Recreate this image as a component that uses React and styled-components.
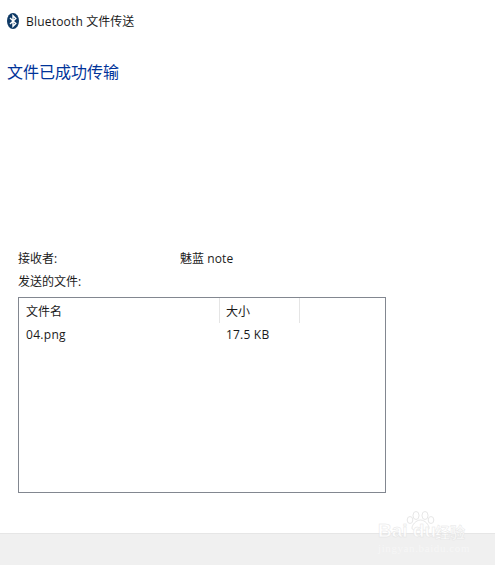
import React from 'react';
import styled, { createGlobalStyle } from 'styled-components';

const GlobalStyle = createGlobalStyle`
  html, body {
    margin: 0;
    padding: 0;
    background: #ffffff;
  }
  body {
    font-family: "Open Sans", "Noto Sans", "Noto Sans CJK SC", sans-serif;
    color: #1a1a1a;
  }
`;

const Dialog = styled.div`
  width: 495px;
  height: 565px;
  display: flex;
  flex-direction: column;
  position: relative;
  overflow: hidden;
`;
const Content = styled.div`
  flex: 1;
  display: flex;
  flex-direction: column;
`;
const TitleBar = styled.div`
  height: 17px;
  margin-top: 12px;
  padding-left: 7px;
  display: flex;
  align-items: center;
  gap: 7px;
  font-size: 12px;
`;
const Latin = styled.span`
  letter-spacing: ${(props) => props.spacing || 0.2}px;
`;
const Heading = styled.h1`
  margin: 32px 0 0 7px;
  height: 22px;
  line-height: 22px;
  font-size: 16px;
  font-weight: 400;
  color: #003399;
`;
const InfoRow = styled.div`
  display: flex;
  height: 16px;
  line-height: 16px;
  padding-left: 18px;
  font-size: 12px;
  margin-top: ${(props) => props.top}px;
`;
const InfoLabel = styled.div`
  width: 162px;
`;
const FileList = styled.div`
  width: 366px;
  height: 194px;
  margin: 7px 0 0 18px;
  border: 1px solid #828790;
  font-size: 12px;
`;
const ListRow = styled.div`
  display: flex;
  height: ${(props) => props.height}px;
  align-items: center;
`;
const ListCell = styled.div`
  width: ${(props) => props.width}px;
  height: 100%;
  padding-left: ${(props) => props.inset}px;
  box-sizing: border-box;
  display: flex;
  align-items: center;
  border-right: ${(props) => (props.divider ? '1px solid #e5e5e5' : 'none')};
`;
const Footer = styled.div`
  height: 32px;
  background: #f0f0f0;
  border-top: 1px solid #e6e6e6;
  box-sizing: border-box;
`;
const Watermark = styled.div`
  position: absolute;
  left: 378px;
  top: 510px;
  width: 110px;
  height: 50px;
  color: #ffffff;
  opacity: 0.8;
  pointer-events: none;
`;
const WatermarkBrand = styled.div`
  position: absolute;
  left: 0;
  top: 9px;
  width: 56px;
  font-family: "Liberation Sans", sans-serif;
  font-size: 19px;
  font-weight: 700;
  line-height: 24px;
  white-space: nowrap;
  -webkit-text-stroke: 0.5px #e2e2e2;
`;
const WatermarkCn = styled.div`
  position: absolute;
  left: 57px;
  top: 12px;
  font-size: 15px;
  font-weight: 700;
  line-height: 20px;
  -webkit-text-stroke: 0.5px #e2e2e2;
`;
const WatermarkUrl = styled.div`
  position: absolute;
  left: 0;
  top: 32px;
  font-family: "Liberation Serif", serif;
  font-size: 11px;
  line-height: 12px;
  letter-spacing: 0.6px;
  white-space: nowrap;
  color: #f8f8f8;
`;
const PawSvg = styled.svg`
  position: absolute;
  left: 28px;
  top: 1px;
`;

const BluetoothIcon = () => (
  <svg width="12" height="16" viewBox="0 0 12 16">
    <ellipse cx="6" cy="8" rx="6" ry="8" fill="#0f3a66" />
    <path
      d="M3 5 L8.8 10.4 L6 13.2 V2.8 L8.8 5.6 L3 11"
      fill="none"
      stroke="#ffffff"
      strokeWidth="1.4"
    />
  </svg>
);

const BaiduPaw = () => (
  <PawSvg width="29" height="20" viewBox="0 0 29 20" fill="#ffffff" stroke="#e2e2e2">
    <ellipse cx="4" cy="9" rx="2.8" ry="3.5" />
    <ellipse cx="10" cy="4.5" rx="3" ry="4" />
    <ellipse cx="19" cy="4.5" rx="3" ry="4" />
    <ellipse cx="25" cy="9" rx="2.8" ry="3.5" />
    <path d="M14.5 9 C10 9 6 14 6 17 C6 20 11 19 14.5 19 C18 19 23 20 23 17 C23 14 19 9 14.5 9 Z" />
  </PawSvg>
);

const App = () => {
  return (
    <Dialog>
      <GlobalStyle />
      <Content>
        <TitleBar>
          <BluetoothIcon />
          <span><Latin>Bluetooth</Latin> 文件传送</span>
        </TitleBar>
        <Heading>文件已成功传输</Heading>
        <InfoRow top={168}>
          <InfoLabel>接收者:</InfoLabel>
          <div>魅蓝 <Latin>note</Latin></div>
        </InfoRow>
        <InfoRow top={7}>
          <InfoLabel>发送的文件:</InfoLabel>
        </InfoRow>
        <FileList>
          <ListRow height={25}>
            <ListCell width={201} inset={7} divider>文件名</ListCell>
            <ListCell width={80} inset={6} divider>大小</ListCell>
          </ListRow>
          <ListRow height={22}>
            <ListCell width={201} inset={7}><Latin spacing={0.3}>04.png</Latin></ListCell>
            <ListCell width={80} inset={6}><Latin>17.5 KB</Latin></ListCell>
          </ListRow>
        </FileList>
      </Content>
      <Footer />
      <Watermark>
        <BaiduPaw />
        <WatermarkBrand>Bai du</WatermarkBrand>
        <WatermarkCn>经验</WatermarkCn>
        <WatermarkUrl>jingyan.baidu.com</WatermarkUrl>
      </Watermark>
    </Dialog>
  );
};

export default App;
